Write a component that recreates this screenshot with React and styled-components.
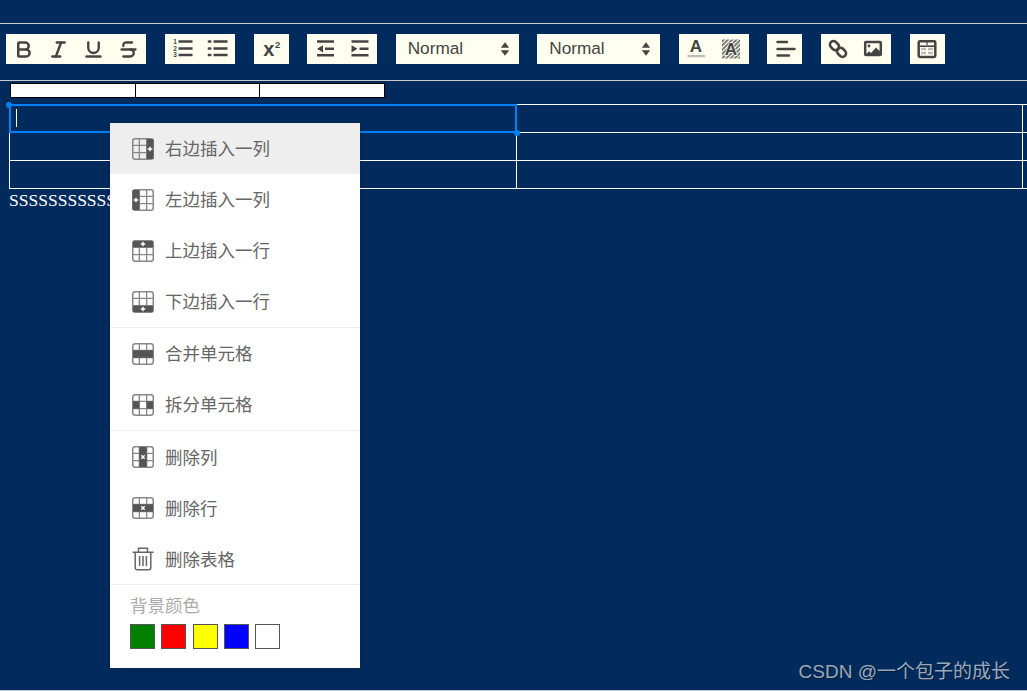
import React from 'react';
import styled, { createGlobalStyle } from 'styled-components';
import { Bold, Italic, Underline, Strikethrough } from 'lucide-react';

const INK = '#444';

const GlobalStyle = createGlobalStyle`
  html, body {
    margin: 0;
    padding: 0;
    background: #002b5c;
  }
`;

const ListOrderedIcon = () => (
  <Glyph viewBox="0 0 22 22">
    <path d="M6.5 3.5h14M6.5 10.5h14M6.5 17h14" stroke={INK} strokeWidth="2.4" fill="none" />
    <text x="1.2" y="6" fontSize="6.5" fontWeight="700" fill={INK} fontFamily="Liberation Sans, sans-serif">1</text>
    <text x="1.2" y="12.5" fontSize="6.5" fontWeight="700" fill={INK} fontFamily="Liberation Sans, sans-serif">2</text>
    <text x="1.2" y="19" fontSize="6.5" fontWeight="700" fill={INK} fontFamily="Liberation Sans, sans-serif">3</text>
  </Glyph>
);

const ListBulletIcon = () => (
  <Glyph viewBox="0 0 22 22">
    <path d="M6.5 3.5h14M6.5 10.5h14M6.5 17h14" stroke={INK} strokeWidth="2.4" fill="none" />
    <path d="M1.8 3.5h1.6M1.8 10.5h1.6M1.8 17h1.6" stroke={INK} strokeWidth="2.4" strokeLinecap="round" fill="none" />
  </Glyph>
);

const SuperIcon = () => (
  <Glyph viewBox="0 0 22 22">
    <text x="3.2" y="17.5" fontSize="20" fontWeight="700" fill={INK} fontFamily="Liberation Sans, sans-serif">x</text>
    <text x="15" y="9.5" fontSize="9.5" fontWeight="700" fill={INK} fontFamily="Liberation Sans, sans-serif">2</text>
  </Glyph>
);

const OutdentIcon = () => (
  <Glyph viewBox="0 0 22 22">
    <path d="M3 3.5h17M11 10.8h9M3 17.2h17" stroke={INK} strokeWidth="2.4" fill="none" />
    <path d="M3 10.8l6-3.6v7.2z" fill={INK} />
  </Glyph>
);

const IndentIcon = () => (
  <Glyph viewBox="0 0 22 22">
    <path d="M2.5 3.5h17M10.5 10.8h9M2.5 17.2h17" stroke={INK} strokeWidth="2.4" fill="none" />
    <path d="M2.5 7.2l6 3.6-6 3.6z" fill={INK} />
  </Glyph>
);

const ColorIcon = () => (
  <Glyph viewBox="0 0 22 22">
    <text x="11" y="14" textAnchor="middle" fontSize="17" fontWeight="700" fill={INK} fontFamily="Liberation Sans, sans-serif">A</text>
    <rect x="2.5" y="17" width="17.5" height="2.2" fill="#bbb" />
  </Glyph>
);

const BackgroundIcon = () => (
  <Glyph viewBox="0 0 22 22">
    <defs>
      <pattern id="hatch" width="3" height="3" patternUnits="userSpaceOnUse" patternTransform="rotate(45)">
        <rect width="1.7" height="3" fill="#666" />
      </pattern>
    </defs>
    <rect x="2" y="1.5" width="18" height="19" fill="url(#hatch)" />
    <text x="11" y="16.5" textAnchor="middle" fontSize="17" fontWeight="700" fill={INK} stroke="#fffff0" strokeWidth="1.4" paintOrder="stroke" fontFamily="Liberation Sans, sans-serif">A</text>
  </Glyph>
);

const AlignIcon = () => (
  <Glyph viewBox="0 0 22 22">
    <path d="M3.5 4h9.5M3.5 11h17M3.5 17.5h11.5" stroke={INK} strokeWidth="2.4" strokeLinecap="round" fill="none" />
  </Glyph>
);

const LinkIcon = () => (
  <Glyph viewBox="0 0 22 22">
    <g fill="none" stroke={INK} strokeWidth="2.6">
      <rect x="2.5" y="4.2" width="10" height="7" rx="3.5" transform="rotate(45 7.5 7.7)" />
      <rect x="9.5" y="10.8" width="10" height="7" rx="3.5" transform="rotate(45 14.5 14.3)" />
    </g>
  </Glyph>
);

const ImageIcon = () => (
  <Glyph viewBox="0 0 22 22">
    <rect x="3.2" y="4" width="15.6" height="13" rx="0.8" fill="#fffff0" stroke={INK} strokeWidth="2.5" />
    <path d="M4 16.5l3-3.2 2 1.6 5-5.4 4 4v3z" fill={INK} />
    <circle cx="7" cy="8" r="1.4" fill={INK} />
  </Glyph>
);

const TableToolIcon = () => (
  <Glyph viewBox="0 0 22 22">
    <rect x="2.7" y="2.3" width="16.6" height="15.6" rx="1.2" fill="#fffff0" stroke={INK} strokeWidth="2.5" transform="translate(0 1)" />
    <path d="M4 8.2h14" stroke={INK} strokeWidth="1.6" />
    <path d="M5 11h5M12 11h5M5 15h5M12 15h5" stroke="#bbb" strokeWidth="2.4" fill="none" />
    <path d="M11 4v3" stroke={INK} strokeWidth="1.2" />
  </Glyph>
);

const UpDownIcon = () => (
  <svg width="10" height="14" viewBox="0 0 10 14">
    <path d="M5 0.3l4.2 5.4H0.8zM5 13.7l-4.2-5.4h8.4z" fill={INK} />
  </svg>
);

// grid icon for the table menu: `shade` names the cells drawn dark, the sign sits on them
const SHADES = {
  right: 'M14.7 1h5.8a1 1 0 0 1 1 1v18a1 1 0 0 1-1 1h-5.8z',
  left: 'M7.3 1H1.5a1 1 0 0 0-1 1v18a1 1 0 0 0 1 1h5.8z',
  top: 'M1 7.3V2a1 1 0 0 1 1-1h18a1 1 0 0 1 1 1v5.3z',
  bottom: 'M1 14.7V20a1 1 0 0 0 1 1h18a1 1 0 0 0 1-1v-5.3z',
  row: 'M1 7.3h20v7.4H1z',
  split: 'M1 7.3h6.3v7.4H1zM14.7 7.3H21v7.4h-6.3z',
  col: 'M7.3 1h7.4v20H7.3z',
};

const Sign = ({ x, y, cross }) => (
  <path
    d={cross
      ? `M${x - 1.7} ${y - 1.7}l3.4 3.4M${x + 1.7} ${y - 1.7}l-3.4 3.4`
      : `M${x - 2.3} ${y}h4.6M${x} ${y - 2.3}v4.6`}
    stroke="#fff"
    strokeWidth="1.4"
    fill="none"
  />
);

const GridIcon = ({ shade, signX, signY, cross }) => (
  <svg width="22" height="22" viewBox="0 0 22 22">
    <rect x="0.75" y="0.75" width="20.5" height="20.5" rx="2.5" fill="none" stroke="#888" strokeWidth="1.5" />
    <path d="M7.33 1v20M14.67 1v20M1 7.33h20M1 14.67h20" stroke="#888" strokeWidth="1.3" fill="none" />
    <path d={SHADES[shade]} fill="#555" />
    {signX && <Sign x={signX} y={signY} cross={cross} />}
  </svg>
);

const TrashIcon = () => (
  <svg width="22" height="24" viewBox="0 0 22 24" fill="none" stroke="#666" strokeWidth="1.5">
    <path d="M0.5 5.2h21M6.5 5V1.2h9V5" />
    <path d="M3.2 5.2v15.6a2 2 0 0 0 2 2h11.6a2 2 0 0 0 2-2V5.2" />
    <path d="M7.6 9v10M11 9v10M14.4 9v10" />
  </svg>
);

const TOOL_GROUPS = [
  [<Bold size={21} strokeWidth={2.9} />, <Italic size={21} strokeWidth={2.8} />, <Underline size={21} strokeWidth={2.7} />, <Strikethrough size={21} strokeWidth={2.6} />],
  [<ListOrderedIcon />, <ListBulletIcon />],
  [<SuperIcon />],
  [<OutdentIcon />, <IndentIcon />],
  'select',
  'select',
  [<ColorIcon />, <BackgroundIcon />],
  [<AlignIcon />],
  [<LinkIcon />, <ImageIcon />],
  [<TableToolIcon />],
];

const MENU_SECTIONS = [
  [
    { label: '右边插入一列', icon: <GridIcon shade="right" signX={18} signY={11} />, active: true },
    { label: '左边插入一列', icon: <GridIcon shade="left" signX={4} signY={11} /> },
    { label: '上边插入一行', icon: <GridIcon shade="top" signX={11} signY={4} /> },
    { label: '下边插入一行', icon: <GridIcon shade="bottom" signX={11} signY={18} /> },
  ],
  [
    { label: '合并单元格', icon: <GridIcon shade="row" /> },
    { label: '拆分单元格', icon: <GridIcon shade="split" /> },
  ],
  [
    { label: '删除列', icon: <GridIcon shade="col" signX={11} signY={11} cross />, low: true },
    { label: '删除行', icon: <GridIcon shade="row" signX={11} signY={11} cross />, low: true },
    { label: '删除表格', icon: <TrashIcon />, low: true },
  ],
];

const SWATCHES = ['green', 'red', 'yellow', 'blue', 'white'];

export default function App() {
  return (
    <Page>
      <GlobalStyle />
      <Toolbar>
        {TOOL_GROUPS.map((group, i) =>
          group === 'select' ? (
            <Picker key={i}>
              <PickerLabel>Normal</PickerLabel>
              <UpDownIcon />
            </Picker>
          ) : (
            <ToolGroup key={i}>
              {group.map((icon, j) => (
                <ToolButton key={j}>{icon}</ToolButton>
              ))}
            </ToolGroup>
          )
        )}
      </Toolbar>

      <Editor>
        <ColumnBar>
          <ColumnCell />
          <ColumnCell />
          <ColumnCell />
        </ColumnBar>

        <Table>
          <tbody>
            {[0, 1, 2].map((row) => (
              <tr key={row}>
                {[0, 1, 2].map((col) => (
                  <Cell key={col}>
                    {row === 0 && col === 0 && (
                      <Selection>
                        <Caret />
                        <Handle $corner="start" />
                        <Handle $corner="end" />
                      </Selection>
                    )}
                  </Cell>
                ))}
              </tr>
            ))}
          </tbody>
        </Table>
        <Paragraph>SSSSSSSSSSSSSSSS</Paragraph>
      </Editor>

      <ContextMenu>
        {MENU_SECTIONS.map((section, i) => (
          <MenuSection key={i}>
            {section.map((item) => (
              <MenuItem key={item.label} $active={item.active}>
                <MenuIcon>{item.icon}</MenuIcon>
                <MenuLabel $low={item.low}>{item.label}</MenuLabel>
              </MenuItem>
            ))}
          </MenuSection>
        ))}
        <ColorSection>
          <ColorLabel>背景颜色</ColorLabel>
          <SwatchRow>
            {SWATCHES.map((color) => (
              <Swatch key={color} $color={color} />
            ))}
          </SwatchRow>
        </ColorSection>
      </ContextMenu>

      <Watermark>CSDN @一个包子的成长</Watermark>
    </Page>
  );
}

const Page = styled.div`
  position: relative;
  box-sizing: border-box;
  height: 691px;
  padding-top: 23px;
  overflow: hidden;
  background: #002b5c;
  border-bottom: 1px solid #c8ccd2;
`;

const Toolbar = styled.div`
  display: flex;
  gap: 18.57px;
  box-sizing: border-box;
  height: 58px;
  padding: 10px 0 16px 6.45px;
  border-top: 1px solid #ccc;
  border-bottom: 1px solid #ccc;
`;

const ToolGroup = styled.div`
  display: flex;
  height: 30px;
  background: #fffff0;
`;

const ToolButton = styled.div`
  display: flex;
  align-items: center;
  justify-content: center;
  width: 35px;
  height: 30px;
  color: ${INK};
`;

const Glyph = styled.svg`
  display: block;
  width: 22px;
  height: 22px;
`;

const Picker = styled.div`
  display: flex;
  align-items: center;
  justify-content: space-between;
  box-sizing: border-box;
  width: 123px;
  height: 30px;
  padding: 0 9px 0 12px;
  background: #fffff0;
  color: ${INK};
  font: 17.2px "Liberation Sans", Arial, sans-serif;
`;

const PickerLabel = styled.span`
  padding-bottom: 2px;
`;

const Editor = styled.div`
  padding: 2px 0 0 9px;
`;

const ColumnBar = styled.div`
  display: flex;
  box-sizing: border-box;
  width: 375px;
  height: 15px;
  margin-left: 1px;
  background: #fff;
  border: 1px solid #000;
`;

const ColumnCell = styled.div`
  flex: 1;
  border-left: 1px solid #000;

  &:first-child {
    border-left: none;
  }
`;

const Table = styled.table`
  width: 1521px;
  margin-top: 6px;
  border-collapse: collapse;
  table-layout: fixed;
`;

const Cell = styled.td`
  position: relative;
  box-sizing: border-box;
  height: 28px;
  padding: 0;
  border: 1px solid #fff;
`;

const Selection = styled.div`
  position: absolute;
  inset: -1px;
  border: 2px solid #0080f5;
`;

const Caret = styled.div`
  position: absolute;
  top: 3px;
  left: 5px;
  width: 1px;
  height: 18px;
  background: #fff;
`;

const Handle = styled.div`
  position: absolute;
  width: 6px;
  height: 6px;
  border-radius: 50%;
  background: #0080f5;
  ${(p) => (p.$corner === 'start' ? 'top: -4px; left: -5px;' : 'bottom: -5px; right: -5px;')}
`;

const Paragraph = styled.p`
  margin: 0;
  color: #fff;
  font: 17.5px/22px "Liberation Serif", "Times New Roman", serif;
`;

const ContextMenu = styled.div`
  position: absolute;
  top: 123px;
  left: 110px;
  width: 250px;
  background: #fff;
  box-shadow: 0 2px 8px rgba(0, 0, 0, 0.15);
`;

const MenuSection = styled.div`
  border-bottom: 1px solid #eee;
`;

const MenuItem = styled.div`
  display: flex;
  align-items: center;
  height: 51px;
  padding-left: 22px;
  gap: 11px;
  background: ${(p) => (p.$active ? '#eee' : 'transparent')};
  color: #666;
  font: 17.5px "Noto Sans CJK SC", "Liberation Sans", sans-serif;
`;

const MenuLabel = styled.span`
  padding-bottom: ${(p) => (p.$low ? 0 : 2)}px;
`;

const MenuIcon = styled.span`
  display: flex;
  align-items: center;
  justify-content: center;
  width: 22px;
  height: 24px;
`;

const ColorSection = styled.div`
  box-sizing: border-box;
  height: 83px;
  padding: 10px 20px 0;
`;

const ColorLabel = styled.div`
  height: 21px;
  color: #aaa;
  font: 17.5px/20px "Noto Sans CJK SC", "Liberation Sans", sans-serif;
`;

const SwatchRow = styled.div`
  display: flex;
  gap: 6.3px;
  margin-top: 8px;
`;

const Swatch = styled.div`
  box-sizing: border-box;
  width: 25px;
  height: 25px;
  background: ${(p) => p.$color};
  border: 1px solid #555;
`;

const Watermark = styled.div`
  position: absolute;
  right: 17px;
  bottom: 7px;
  color: rgba(255, 255, 255, 0.62);
  font: 19px "Liberation Sans", "Noto Sans CJK SC", sans-serif;
  text-shadow: 1px 1px 1px rgba(0, 0, 0, 0.35);
`;
